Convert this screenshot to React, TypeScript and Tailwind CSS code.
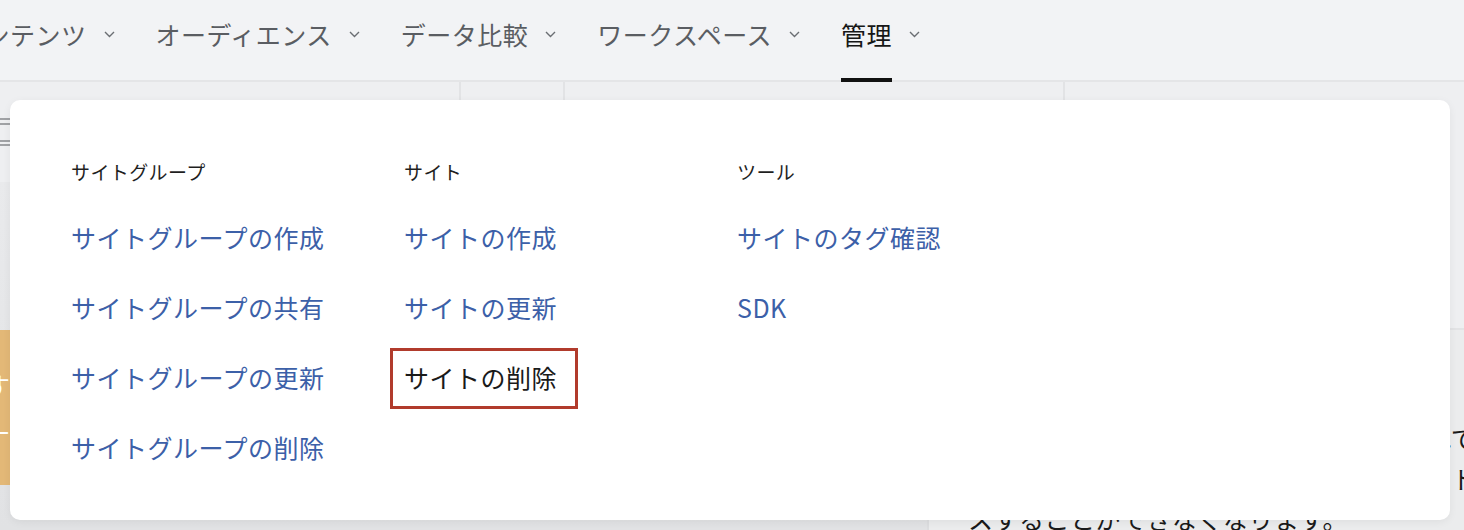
import { ReactNode } from "react";

const navItems = ["コンテンツ", "オーディエンス", "データ比較", "ワークスペース", "管理"];

const columns = [
  { title: "サイトグループ", links: ["サイトグループの作成", "サイトグループの共有", "サイトグループの更新", "サイトグループの削除"] },
  { title: "サイト", links: ["サイトの作成", "サイトの更新", "サイトの削除"] },
  { title: "ツール", links: ["サイトのタグ確認", "SDK"] },
];

function Chevron() {
  return (
    <svg width="11" height="7" viewBox="0 0 11 7" className="shrink-0 mb-[14px] ml-[17px]">
      <polyline points="1,1 5.5,5.5 10,1" fill="none" stroke="#6b6e73" strokeWidth="1.4" />
    </svg>
  );
}

function NavItem({ label, active }: { label: string; active?: boolean }) {
  return (
    <div className="flex items-center h-full mr-[41px] shrink-0">
      <span
        className={
          active
            ? "h-full flex items-center pb-[12px] text-[#161616] shadow-[inset_0_-4px_0_#111]"
            : "h-full flex items-center pb-[12px] text-[#5a5d62]"
        }
      >
        {label}
      </span>
      <Chevron />
    </div>
  );
}

function MenuLink({ children, selected }: { children: ReactNode; selected?: boolean }) {
  if (selected) {
    return (
      <div className="h-[70px] flex items-center">
        <div className="-ml-[14px] h-[61px] w-[188px] flex items-center px-[11px] border-[3px] border-[#b13b2c] text-[#1a1a1a]">
          {children}
        </div>
      </div>
    );
  }
  return <div className="h-[70px] flex items-center text-[#3c60a8]">{children}</div>;
}

export default function App() {
  return (
    <div className="relative w-[1464px] h-[530px] overflow-hidden bg-[#e6e7e9] font-['Noto_Sans_CJK_JP','Noto_Sans',sans-serif]">
      {/* top navigation */}
      <nav className="h-[82px] bg-[#f2f3f5] shadow-[inset_0_-2px_0_#e4e5e7] flex text-[25px] tracking-[0.5px] -ml-[41px]">
        {navItems.map((n) => (
          <NavItem key={n} label={n} active={n === "管理"} />
        ))}
      </nav>

      {/* toolbar row */}
      <div className="h-[100px] bg-[#eeeff1] flex">
        <div className="w-[461px] shrink-0 border-r-2 border-[#e2e3e5]">
          <svg width="12" height="30" viewBox="0 0 12 30" className="mt-[36px]">
            <rect x="0" y="0" width="10" height="2" fill="#a0a2a5" />
            <rect x="0" y="5" width="10" height="2" fill="#a0a2a5" />
            <rect x="0" y="22" width="10" height="2" fill="#a0a2a5" />
            <rect x="0" y="26" width="10" height="2" fill="#a0a2a5" />
          </svg>
        </div>
        <div className="w-[104px] shrink-0 border-r-2 border-[#e2e3e5]" />
        <div className="w-[500px] shrink-0 border-r-2 border-[#e2e3e5]" />
        <div className="flex-1" />
      </div>

      {/* page body */}
      <div className="flex h-[348px]">
        <div className="w-[927px] shrink-0 pt-[148px] bg-gradient-to-b from-[#e9eaec] to-[#e1e2e4]">
          <div className="w-[10px] h-[155px] bg-[#e3b877] overflow-hidden text-white text-[25px] leading-[50px] pt-[30px]">
            <div className="-ml-[15px]">す</div>
            <div className="-ml-[15px]">ナ</div>
          </div>
        </div>
        <div className="flex-1 min-w-0 border-l-2 border-[#dcdddf] flex flex-col">
          <div className="h-[148px] shrink-0 bg-[#eeeff1] border-b-2 border-[#e2e3e5]" />
          <div className="flex-1 bg-[#ebeced] pl-[39px] pt-[88px] text-[25px] tracking-[0.5px] leading-[40px] text-[#1a1a1a] whitespace-nowrap overflow-hidden">
            <div>サイトを削除すると、設定が全て削除されて、</div>
            <div>データの計測や分析ができなくなり、サイトにアクセ</div>
            <div>スすることができなくなります。</div>
          </div>
        </div>
      </div>

      {/* dropdown panel */}
      <div className="absolute left-[10px] top-[100px] w-[1440px] h-[420px] bg-white rounded-[10px] shadow-[0_2px_8px_rgba(0,0,0,0.06)] pl-[61px] pt-[58px] flex">
        {columns.map((col) => (
          <div key={col.title} className="w-[333px] shrink-0">
            <div className="h-[28px] leading-[28px] text-[19px] tracking-[0.4px] text-[#1f1f1f]">{col.title}</div>
            <div className="mt-[17px] text-[25px] tracking-[0.5px]">
              {col.links.map((l) => (
                <MenuLink key={l} selected={l === "サイトの削除"}>
                  {l}
                </MenuLink>
              ))}
            </div>
          </div>
        ))}
      </div>
    </div>
  );
}
